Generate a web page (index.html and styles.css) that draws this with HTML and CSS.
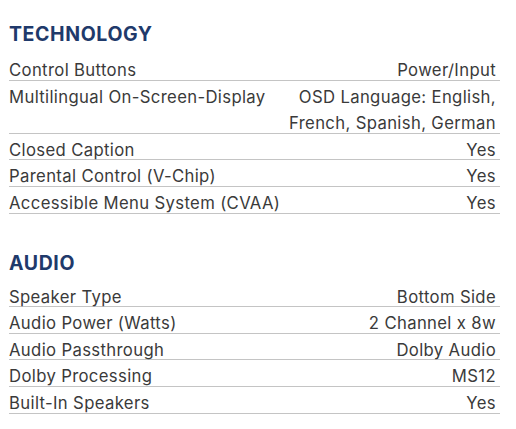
FILE: index.html
```html
<!DOCTYPE html>
<html>
<head>
<meta charset="utf-8">
<link rel="stylesheet" href="styles.css">
</head>
<body>
<div class="specs">
  <section class="group">
    <h2 class="title">TECHNOLOGY</h2>
    <div class="row"><span class="label">Control Buttons</span><span class="value">Power/Input</span></div>
    <div class="row"><span class="label">Multilingual On-Screen-Display</span><span class="value">OSD Language: English,<br>French, Spanish, German</span></div>
    <div class="row"><span class="label">Closed Caption</span><span class="value">Yes</span></div>
    <div class="row"><span class="label">Parental Control (V-Chip)</span><span class="value">Yes</span></div>
    <div class="row"><span class="label">Accessible Menu System (CVAA)</span><span class="value">Yes</span></div>
  </section>
  <section class="group">
    <h2 class="title title--tight">AUDIO</h2>
    <div class="row"><span class="label">Speaker Type</span><span class="value">Bottom Side</span></div>
    <div class="row"><span class="label">Audio Power (Watts)</span><span class="value">2 Channel x 8w</span></div>
    <div class="row"><span class="label">Audio Passthrough</span><span class="value">Dolby Audio</span></div>
    <div class="row"><span class="label">Dolby Processing</span><span class="value">MS12</span></div>
    <div class="row"><span class="label">Built-In Speakers</span><span class="value">Yes</span></div>
  </section>
</div>
</body>
</html>
```
FILE: styles.css
```css
html, body {
  margin: 0;
  padding: 0;
  background: #ffffff;
}
body {
  font-family: "Inter", "Open Sans", "Liberation Sans", sans-serif;
  color: #3a3a3a;
}
.specs {
  width: 491px;
  padding: 19px 0 0 9px;
  display: flex;
  flex-direction: column;
  gap: 34px;
}
.title {
  margin: 0 0 5px;
  font-size: 19.5px;
  font-weight: 700;
  letter-spacing: 0.6px;
  color: #1f3a6b;
  line-height: 30px;
}
.title--tight {
  margin-bottom: 3px;
}
.row {
  display: flex;
  justify-content: space-between;
  font-size: 16.7px;
  letter-spacing: 0.35px;
  line-height: 26.6px;
  padding: 3px 4px 0 0;
  box-shadow: inset 0 -1px 0 #c4c4c4;
}
.row > span {
  margin-bottom: -3px;
}
.value {
  text-align: right;
}
```
